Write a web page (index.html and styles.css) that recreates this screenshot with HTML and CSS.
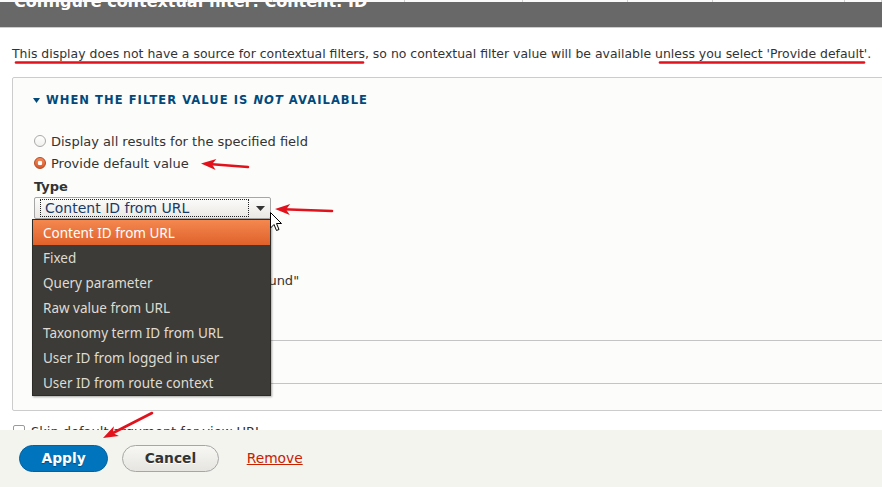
FILE: index.html
```html
<!DOCTYPE html>
<html lang="en">
<head>
<meta charset="utf-8">
<title>Configure contextual filter</title>
<link rel="stylesheet" href="styles.css">
</head>
<body>
<div class="page-strip"><span></span><span></span><span></span><span></span><span></span><span></span><span></span><span></span><span></span></div>
<div class="dialog-title"><h1>Configure contextual filter: Content: ID</h1></div>

<div class="content">
  <p class="message">This display does not have a source for contextual filters, so no contextual filter value will be available unless you select 'Provide default'.</p>

  <div class="details">
    <div class="summary">
      <svg class="summary-tri" width="7" height="5" viewBox="0 0 7 5"><path d="M0 0H7L3.5 5Z" fill="#00497a"/></svg>
      <span>WHEN THE FILTER VALUE IS <em>NOT</em> AVAILABLE</span>
    </div>
    <div class="details-body">
      <label class="radio"><span class="radio-mark"></span>Display all results for the specified field</label>
      <label class="radio"><span class="radio-mark checked"></span>Provide default value</label>
      <div class="type-label">Type</div>
      <div class="select-wrap">
        <div class="select">
          <span class="select-value">Content ID from URL</span>
          <svg class="select-arrow" width="9" height="5" viewBox="0 0 9 5"><path d="M0 0H9L4.5 5Z" fill="#333"/></svg>
        </div>
        <ul class="menu">
          <li class="active">Content ID from URL</li>
          <li>Fixed</li>
          <li>Query parameter</li>
          <li>Raw value from URL</li>
          <li>Taxonomy term ID from URL</li>
          <li>User ID from logged in user</li>
          <li>User ID from route context</li>
        </ul>
      </div>
      <div class="more-options">
        <label class="radio"><span class="radio-mark"></span>Display contents of "No results found"</label>
      </div>
      <div class="inner-box"></div>
    </div>
  </div>

  <div class="skip-row"><span class="checkbox"></span>Skip default argument for view URL</div>
</div>

<div class="actions">
  <button class="button button-primary">Apply</button>
  <button class="button button-secondary">Cancel</button>
  <a class="remove-link" href="#">Remove</a>
</div>

<svg class="annotations" width="882" height="487" viewBox="0 0 882 487">
  <g stroke="#e2121d" stroke-width="2.6" stroke-linecap="round" fill="none">
    <path d="M16 62.5 L363 62.5"/>
    <path d="M660 62.5 L864 62.5"/>
    <path d="M248 167 L209 164"/>
    <path d="M332 211 L283 209.3"/>
    <path d="M152 413 L110 434.5"/>
  </g>
  <g fill="#e2121d">
    <path d="M201 163.5 L216.4 159.1 L212 164.3 L215.6 170.1 Z"/>
    <path d="M275 209 L290.2 204 L286 209.4 L289.8 215 Z"/>
    <path d="M103 438 L113.9 426.3 L112.8 433 L118.9 436.1 Z"/>
  </g>
</svg>

<svg class="cursor" width="13" height="20" viewBox="0 0 13 20"><path d="M0.5 0.5 L0.5 16 L4 12.5 L6.5 18.5 L9 17.5 L6.5 11.5 L11.5 11.5 Z" fill="#fff" stroke="#000" stroke-width="1" stroke-linejoin="round"/></svg>
</body>
</html>
```
FILE: styles.css
```css
* { box-sizing: border-box; }
html, body { margin: 0; padding: 0; }
body {
  width: 882px;
  height: 487px;
  overflow: hidden;
  position: relative;
  background: #fff;
  font-family: "DejaVu Sans", Verdana, sans-serif;
  font-size: 13px;
  color: #333;
}

.page-strip {
  height: 2px;
  display: grid;
  grid-template-columns: 83px 105px 85px 132px 118px 105px 85px 132px 1fr;
  background: #fafafa;
}
.page-strip span { border-right: 1px solid #d0d0d0; }

.dialog-title {
  height: 26px;
  background: #686868;
  border-bottom: 1px solid #cdcdcd;
  overflow: hidden;
  padding-left: 14px;
}
.dialog-title h1 {
  margin: -10px 0 0;
  font-size: 16px;
  line-height: 20px;
  font-weight: bold;
  color: #fff;
  white-space: nowrap;
}

.content { padding: 17px 0 0 12px; }
.message {
  margin: 0;
  font-size: 12.45px;
  line-height: 18px;
  white-space: nowrap;
  color: #333;
}

.details {
  margin-top: 14px;
  margin-right: -10px;
  border: 1px solid #ccc;
  border-radius: 2px 0 0 2px;
  background: #fcfcfa;
  padding: 13px 0 26px 0;
}
.summary {
  display: flex;
  align-items: center;
  padding-left: 20px;
  height: 18px;
  font-size: 11.5px;
  font-weight: bold;
  letter-spacing: 0.092em;
  color: #00497a;
  white-space: nowrap;
}
.summary-tri { margin-right: 6px; }
.summary em { font-style: italic; }

.details-body { padding: 21px 0 0 21px; }

.radio {
  display: flex;
  align-items: center;
  height: 22px;
  white-space: nowrap;
}
.radio-mark {
  width: 12px;
  height: 12px;
  margin-right: 5px;
  border-radius: 50%;
  border: 1px solid #a9a9a9;
  background: linear-gradient(#fff, #f0f0ee);
  flex: none;
}
.radio-mark.checked {
  border-color: #b6481f;
  background: radial-gradient(circle, #fff 0 2px, rgba(255,255,255,0) 2.6px), linear-gradient(#f28b5c, #d6592b);
}

.type-label {
  margin-top: 4px;
  line-height: 18px;
  font-weight: bold;
}

.select-wrap {
  position: relative;
  margin-top: 1px;
  width: 237px;
}
.select {
  display: flex;
  align-items: center;
  height: 22px;
  padding: 0 5px;
  border: 1px solid #a6a6a6;
  border-radius: 2px;
  background: linear-gradient(#fcfcfb, #e9e8e3);
}
.select-value {
  flex: 0 0 209px;
  height: 18px;
  border: 1px dotted #222;
  padding-left: 4px;
  font-size: 14px;
  line-height: 16px;
  color: #193b68;
  white-space: nowrap;
}
.select-arrow { margin-left: auto; }

.menu {
  position: absolute;
  top: 22px;
  left: -2px;
  width: 239px;
  margin: 0;
  padding: 0;
  list-style: none;
  background: #3c3b37;
  border: 1px solid #2c2b28;
  box-shadow: 1px 1px 2px rgba(0,0,0,0.35);
  font-family: "Noto Sans", "Open Sans", sans-serif;
  font-size: 13.5px;
  color: #dfdbd2;
  z-index: 5;
}
.menu li {
  height: 25px;
  line-height: 27px;
  padding-left: 10px;
  white-space: nowrap;
}
.menu li.active {
  background: linear-gradient(#f4884f, #e0612b);
  color: #fff;
}

.more-options { margin-top: 50px; }

.inner-box {
  margin-top: 49px;
  height: 44px;
  border-top: 1px solid #c4c4c4;
  border-bottom: 1px solid #c4c4c4;
}

.skip-row {
  height: 19px;
  overflow: hidden;
  padding-top: 12px;
  display: flex;
  align-items: flex-start;
  line-height: 18px;
  white-space: nowrap;
}
.checkbox {
  width: 12px;
  height: 12px;
  margin: 2px 6px 0 1px;
  border: 1px solid #9a9a9a;
  border-radius: 2px;
  background: #fff;
  flex: none;
}

.actions {
  height: 57px;
  background: #f3f4ee;
  padding: 15px 0 0 19px;
  display: flex;
  align-items: flex-start;
}
.button {
  height: 27px;
  padding: 0 21.5px;
  border-radius: 20px;
  font-family: "DejaVu Sans", Verdana, sans-serif;
  font-size: 13.8px;
  font-weight: bold;
  line-height: 25px;
  border: 1px solid;
  cursor: pointer;
}
.button-primary {
  background: #0074bd;
  border-color: #0062a0;
  color: #fff;
  text-shadow: 0 1px 1px rgba(0,0,0,0.35);
}
.button-secondary {
  margin-left: 14px;
  background: linear-gradient(#f7f7f4, #e6e5e0);
  border-color: #a6a6a6;
  color: #333;
  text-shadow: 0 1px 0 #fff;
}
.remove-link {
  margin-left: 28px;
  line-height: 27px;
  font-size: 13.8px;
  color: #c72100;
  text-decoration: underline;
}

.annotations {
  position: absolute;
  top: 0;
  left: 0;
  pointer-events: none;
  z-index: 10;
}
.cursor {
  position: absolute;
  left: 270px;
  top: 212px;
  z-index: 11;
  pointer-events: none;
}
```
